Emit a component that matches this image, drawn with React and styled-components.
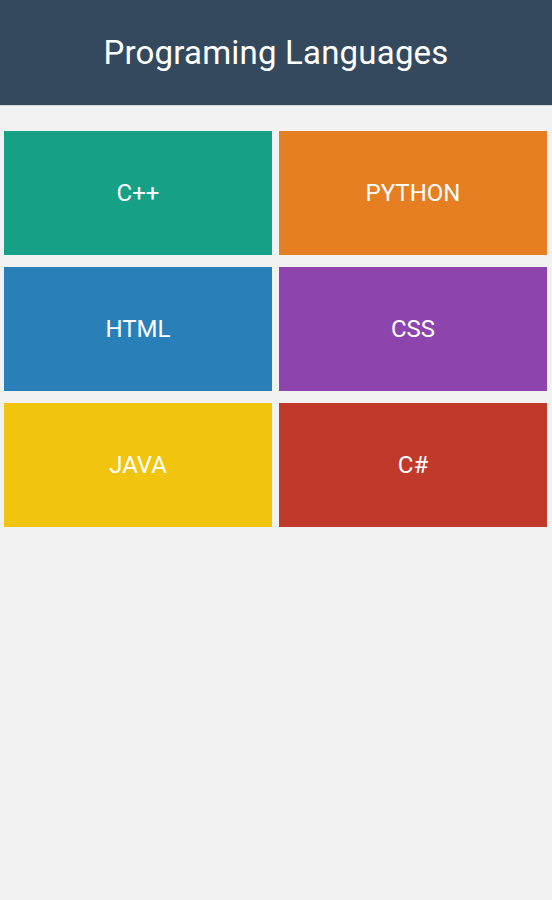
import React from 'react';
import styled, { createGlobalStyle } from 'styled-components';

const GlobalStyle = createGlobalStyle`
  html, body {
    margin: 0;
    padding: 0;
    background: #f2f2f2;
    font-family: Roboto, "Liberation Sans", sans-serif;
  }
`

const Page = styled.div`
  width: 552px;
  min-height: 900px;
  background: #f2f2f2;
`

const Header = styled.header`
  height: 106px;
  background: #34495e;
  display: flex;
  align-items: center;
  justify-content: center;
  border-bottom: 1px solid #cfd4d8;
  box-sizing: border-box;
`

const Title = styled.h1`
  margin: 0;
  color: #fff;
  font-size: 33px;
  font-weight: 400;
  letter-spacing: 0.2px;
`

const Grid = styled.div`
  display: grid;
  grid-template-columns: 268px 268px;
  grid-auto-rows: 124px;
  column-gap: 7px;
  row-gap: 12px;
  padding: 25px 4px 0;
`

const Tile = styled.div`
  background: ${props => props.color};
  display: flex;
  align-items: center;
  justify-content: center;
  color: #fff;
  font-size: 24px;
`

const languages = [
  { name: 'C++', color: '#16a085' },
  { name: 'PYTHON', color: '#e67e22' },
  { name: 'HTML', color: '#2980b9' },
  { name: 'CSS', color: '#8e44ad' },
  { name: 'JAVA', color: '#f1c40f' },
  { name: 'C#', color: '#c0392b' },
]

const App = () => {
  return (
    <Page>
      <GlobalStyle />
      <Header>
        <Title>Programing Languages</Title>
      </Header>
      <Grid>
        {languages.map(lang => (
          <Tile key={lang.name} color={lang.color}>{lang.name}</Tile>
        ))}
      </Grid>
    </Page>
  );
}

export default App;
